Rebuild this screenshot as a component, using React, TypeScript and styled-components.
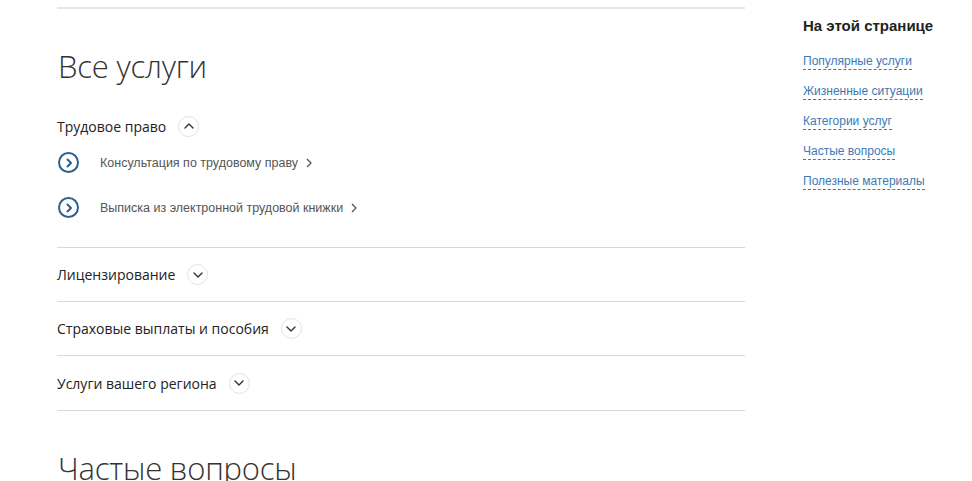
import React from "react";
import styled, { createGlobalStyle } from "styled-components";

const Global = createGlobalStyle`
  html, body { margin: 0; padding: 0; background: #fff; }
  body { font-family: "Liberation Sans", Arial, sans-serif; color: #222; }
`;

const Page = styled.div`
  display: flex;
  align-items: flex-start;
  gap: 58px;
  padding-left: 57px;
`;

const Main = styled.main`
  width: 688px;
  flex: none;
`;

const TopRule = styled.div`
  margin-top: 7px;
  height: 2px;
  background: #e6e6e6;
`;

const Heading = styled.h2<{ $top: number }>`
  margin: ${(p) => p.$top}px 0 0 1px;
  font-family: "Open Sans", "Lato", sans-serif;
  font-weight: 300;
  font-size: 31px;
  line-height: 40px;
  color: #333;
  letter-spacing: -0.2px;
`;

const Category = styled.section<{ $divider?: boolean }>`
  border-bottom: ${(p) => (p.$divider ? "1px solid #d9d9d9" : "none")};
`;

const CatHeader = styled.div<{ $h: number }>`
  display: flex;
  align-items: center;
  height: ${(p) => p.$h}px;
  gap: 12px;
  font-family: "Open Sans", "Lato", sans-serif;
  font-size: 14px;
  color: #222;
`;

const Toggle = styled.span`
  width: 19px;
  height: 19px;
  border: 1px solid #e2e2e2;
  border-radius: 50%;
  display: inline-flex;
  align-items: center;
  justify-content: center;
  flex: none;
`;

const ServiceList = styled.ul`
  list-style: none;
  margin: -6px 0 0;
  padding: 0 0 17px;
`;

const Service = styled.li`
  display: flex;
  align-items: center;
  height: 45px;
  font-size: 12.5px;
  color: #555;
`;

const ServiceIcon = styled.span`
  width: 17px;
  height: 17px;
  border: 2px solid #2c5f8c;
  border-radius: 50%;
  display: inline-flex;
  align-items: center;
  justify-content: center;
  margin: 0 21px 0 1px;
  flex: none;
`;

const Arrow = styled.svg`
  margin-left: 8px;
  flex: none;
`;

const Aside = styled.aside`
  padding-top: 16px;
`;

const AsideTitle = styled.div`
  font-weight: bold;
  font-size: 15px;
  line-height: 20px;
  color: #222;
  margin-bottom: 17px;
`;

const Links = styled.nav`
  display: flex;
  flex-direction: column;
  align-items: flex-start;
  gap: 13px;
`;

const Link = styled.a`
  font-size: 12px;
  line-height: 16px;
  color: #3d7ab3;
  text-decoration: none;
  border-bottom: 1px dashed #3d7ab3;
`;

const ChevronSmall = ({ up }: { up?: boolean }) => (
  <svg width="10" height="6" viewBox="0 0 10 6">
    <path
      d={up ? "M1 5 L5 1 L9 5" : "M1 1 L5 5 L9 1"}
      fill="none"
      stroke="#333"
      strokeWidth="1.4"
      strokeLinecap="round"
      strokeLinejoin="round"
    />
  </svg>
);

const services = [
  "Консультация по трудовому праву",
  "Выписка из электронной трудовой книжки",
];

const collapsed = [
  "Лицензирование",
  "Страховые выплаты и пособия",
  "Услуги вашего региона",
];

const links = [
  "Популярные услуги",
  "Жизненные ситуации",
  "Категории услуг",
  "Частые вопросы",
  "Полезные материалы",
];

export default function App() {
  return (
    <>
      <Global />
      <Page>
        <Main>
          <TopRule />
          <Heading $top={37}>Все услуги</Heading>
          <Category $divider>
            <CatHeader $h={40} style={{ marginTop: 20 }}>
              Трудовое право
              <Toggle>
                <ChevronSmall up />
              </Toggle>
            </CatHeader>
            <ServiceList>
              {services.map((s) => (
                <Service key={s}>
                  <ServiceIcon>
                    <svg width="8" height="10" viewBox="0 0 8 10">
                      <path
                        d="M2.5 1.5 L6 5 L2.5 8.5"
                        fill="none"
                        stroke="#2c5f8c"
                        strokeWidth="2"
                        strokeLinecap="round"
                        strokeLinejoin="round"
                      />
                    </svg>
                  </ServiceIcon>
                  {s}
                  <Arrow width="6" height="10" viewBox="0 0 6 10">
                    <path
                      d="M1 1 L5 5 L1 9"
                      fill="none"
                      stroke="#555"
                      strokeWidth="1.3"
                    />
                  </Arrow>
                </Service>
              ))}
            </ServiceList>
          </Category>
          {collapsed.map((c, i) => (
            <Category $divider key={c}>
              <CatHeader $h={i === 2 ? 54 : 53}>
                {c}
                <Toggle>
                  <ChevronSmall />
                </Toggle>
              </CatHeader>
            </Category>
          ))}
          <Heading $top={37}>Частые вопросы</Heading>
        </Main>
        <Aside>
          <AsideTitle>На этой странице</AsideTitle>
          <Links>
            {links.map((l) => (
              <Link key={l} href="#">
                {l}
              </Link>
            ))}
          </Links>
        </Aside>
      </Page>
    </>
  );
}
